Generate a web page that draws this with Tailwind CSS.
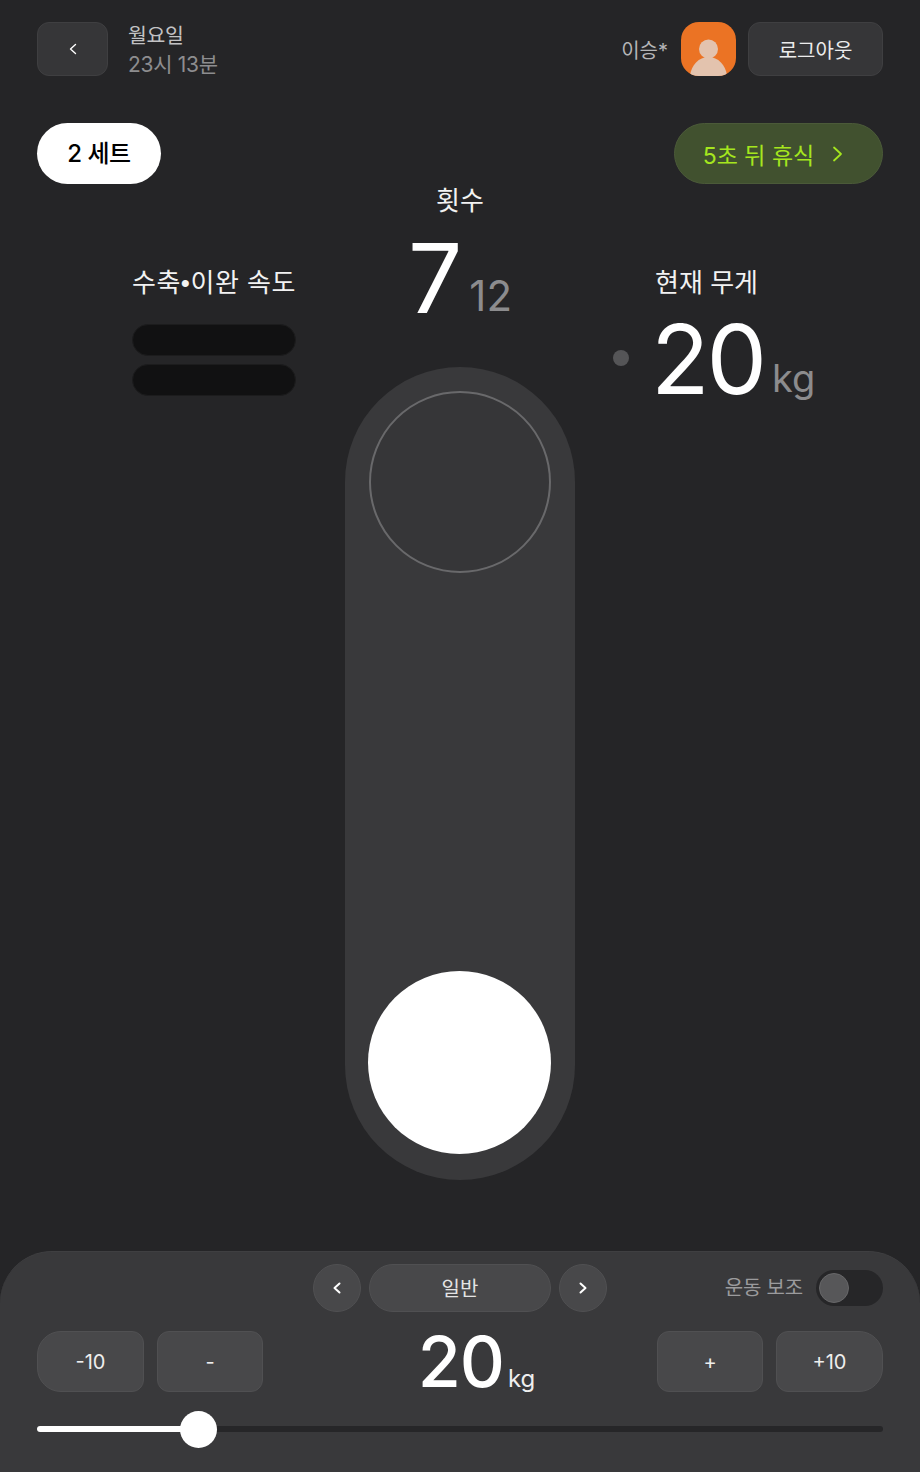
<!DOCTYPE html>
<html lang="ko">
<head>
  <meta charset="UTF-8" />
  <meta name="viewport" content="width=device-width, initial-scale=1" />
  <title>운동</title>
  <script src="https://cdn.jsdelivr.net/npm/@tailwindcss/browser@4"></script>
</head>
<body class="bg-[#252527] text-white font-['Inter','Noto_Sans_CJK_KR',sans-serif]">
  <div class="w-[920px] h-[1472px] flex flex-col overflow-hidden">

    <!-- 상단 -->
    <header class="h-[54px] mt-[22px] px-[37px] flex items-center justify-between">
      <div class="flex items-center gap-5">
        <button class="w-[71px] h-[54px] rounded-xl bg-[#363638] border border-[#3f3f41] flex items-center justify-center">
          <svg width="12" height="14" viewBox="0 0 12 14" fill="none" stroke="#fff" stroke-width="1.4" stroke-linecap="round" stroke-linejoin="round"><path d="M8.500 2.500 3.500 7l5 4.500"/></svg>
        </button>
        <div class="leading-[29px] tracking-[-0.3px]">
          <p class="text-[20.500px] text-[#c2c2c4] pt-[1px]">월요일</p>
          <p class="text-[21px] text-[#8d8d8f]">23시 13분</p>
        </div>
      </div>
      <div class="flex items-center">
        <span class="text-[20px] text-[#b5b5b7] mr-[13px] pt-1">이승*</span>
        <div class="w-[55px] h-[54px] rounded-[18px] bg-[#eb7324] overflow-hidden mr-3">
          <svg width="55" height="54" viewBox="0 0 55 54" fill="#e3c3ae"><circle cx="27.500" cy="27" r="9.500"/><path d="M9 54c1-11 9-19 18.500-19S45 43 46 54z"/></svg>
        </div>
        <button class="w-[135px] h-[54px] pt-1 rounded-xl bg-[#363638] border border-[#3f3f41] text-[20px] text-[#ececec]">로그아웃</button>
      </div>
    </header>

    <!-- 세트 / 휴식 -->
    <div class="h-[61px] mt-[47px] px-[37px] flex items-center justify-between">
      <div class="w-[124px] h-[61px] rounded-full bg-white text-black text-[24px] font-medium tracking-[-0.5px] flex items-center justify-center">2 세트</div>
      <button class="w-[209px] h-[61px] pr-[9px] rounded-full bg-[#41512f] border border-[#4b5a39] text-[#a5e61e] text-[23px] flex items-center justify-center gap-[17px]">
        <span class="pt-[6px]">5초 뒤 휴식</span>
        <svg width="14" height="18" viewBox="0 0 14 18" fill="none" stroke="#a5e61e" stroke-width="1.8" stroke-linecap="round" stroke-linejoin="round"><path d="M3 2.500 10 9l-7 6.500"/></svg>
      </button>
    </div>

    <!-- 본문 -->
    <main class="h-[1063px] mt-[4px] grid grid-cols-[345px_230px_345px]">
      <section class="pt-[80px] pl-[132px]">
        <p class="w-[164px] text-[26px] leading-[30px] text-[#f2f2f2] text-center tracking-[0.5px] whitespace-nowrap">수축<span class="font-['Liberation_Sans']">•</span>이완 속도</p>
        <div class="mt-[26px] w-[164px] flex flex-col gap-2">
          <div class="h-[32px] rounded-full bg-[#111112] border border-[#1c1c1d]"></div>
          <div class="h-[32px] rounded-full bg-[#111112] border border-[#1c1c1d]"></div>
        </div>
      </section>

      <section class="flex flex-col items-center">
        <p class="text-[26px] leading-[24px] text-[#f2f2f2] pt-[1px]">횟수</p>
        <div class="h-[154px] flex items-start">
          <span class="text-[96px] leading-[96px] mt-[17px] font-normal">7</span>
          <span class="text-[42px] leading-[42px] mt-[62px] ml-[7px] text-[#8c8c8e]">12</span>
        </div>
        <div class="w-[230px] h-[813px] rounded-[115px] bg-[#39393b] p-6 flex flex-col justify-between">
          <div class="w-[182px] h-[182px] rounded-full border-2 border-[#69696b] bg-[#363638]"></div>
          <div class="w-[183px] h-[183px] -mb-[-2px] -ml-[1px] rounded-full bg-white"></div>
        </div>
      </section>

      <section class="pt-[80px] pl-[38px] flex items-start">
        <div class="w-4 h-4 mt-[82px] rounded-full bg-[#555557]"></div>
        <div class="ml-[26px]">
          <p class="text-[26px] leading-[30px] text-[#f2f2f2]">현재 무게</p>
          <div class="flex items-start mt-[13px] -ml-[4px]">
            <span class="text-[96px] leading-[96px] tracking-[-3px]">20</span>
            <span class="text-[38px] leading-[38px] mt-[48px] ml-[8px] text-[#8c8c8e]">kg</span>
          </div>
        </div>
      </section>
    </main>

    <!-- 하단 패널 -->
    <footer class="h-[221px] rounded-t-[52px] bg-[#39393b] border-t border-[#3f3f41] px-[37px] pt-3">
      <div class="relative h-[48px] flex items-center justify-center gap-2">
        <button class="w-[48px] h-[48px] rounded-full bg-[#48484a] border border-[#505052] flex items-center justify-center">
          <svg width="12" height="14" viewBox="0 0 12 14" fill="none" stroke="#fff" stroke-width="2" stroke-linecap="round" stroke-linejoin="round"><path d="M8.500 2.500 3.500 7l5 4.500"/></svg>
        </button>
        <div class="w-[182px] h-[48px] pt-[2px] rounded-full bg-[#48484a] border border-[#505052] text-[20px] text-[#e4e4e4] flex items-center justify-center">일반</div>
        <button class="w-[48px] h-[48px] rounded-full bg-[#48484a] border border-[#505052] flex items-center justify-center">
          <svg width="12" height="14" viewBox="0 0 12 14" fill="none" stroke="#fff" stroke-width="2" stroke-linecap="round" stroke-linejoin="round"><path d="M3.500 2.500 8.500 7l-5 4.500"/></svg>
        </button>
        <div class="absolute right-0 top-[6px] flex items-center gap-[13px]">
          <span class="text-[20px] text-[#9b9b9d] tracking-[-0.2px]">운동 보조</span>
          <div class="w-[67px] h-[36px] rounded-full bg-[#262628] p-[3px]">
            <div class="w-[30px] h-[30px] rounded-full bg-[#575759] border border-[#676769]"></div>
          </div>
        </div>
      </div>

      <div class="h-[61px] mt-[19px] flex items-center justify-between">
        <div class="flex gap-[13px]">
          <button class="w-[107px] h-[61px] rounded-l-[24px] rounded-r-xl bg-[#48484a] border border-[#505052] text-[20px] text-[#eeeeee]">-10</button>
          <button class="w-[106px] h-[61px] rounded-xl bg-[#48484a] border border-[#505052] text-[20px] text-[#eeeeee]">-</button>
        </div>
        <div class="flex items-end ml-[33px]">
          <span class="text-[70px] leading-[70px] font-medium tracking-[-1px]">20</span>
          <span class="text-[24px] leading-[36px] ml-[4px] text-[#eeeeee]">kg</span>
        </div>
        <div class="flex gap-[13px]">
          <button class="w-[106px] h-[61px] rounded-xl bg-[#48484a] border border-[#505052] text-[20px] text-[#eeeeee]">+</button>
          <button class="w-[107px] h-[61px] rounded-r-[24px] rounded-l-xl bg-[#48484a] border border-[#505052] text-[20px] text-[#eeeeee]">+10</button>
        </div>
      </div>

      <div class="relative h-[6px] mt-[34px] rounded-full bg-[#262628]">
        <div class="h-full w-[161px] rounded-full bg-white"></div>
        <div class="absolute left-[143px] -top-[15.500px] w-[37px] h-[37px] rounded-full bg-white"></div>
      </div>
    </footer>
  </div>
</body>
</html>
